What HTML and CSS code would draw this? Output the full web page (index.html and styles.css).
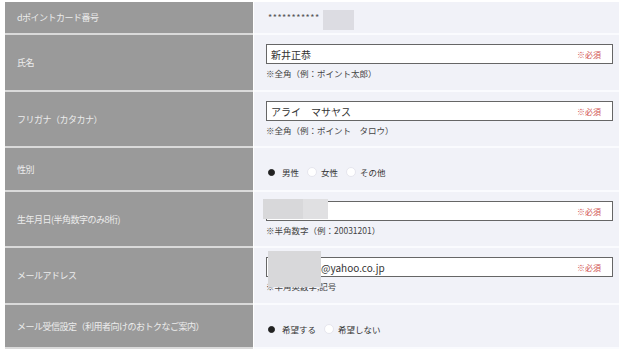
FILE: index.html
```html
<!DOCTYPE html>
<html lang="ja">
    <head>
        <title>会員情報の変更</title>
        <meta charset="utf-8" />
        <link rel="stylesheet" href="styles.css">
    </head>
    <body>
        <div class="form">
            <div class="row row-short">
                <div class="label">dポイントカード番号</div>
                <div class="value value-center">
                    <span class="card-no">***********</span>
                    <span class="redact redact-card"></span>
                </div>
            </div>

            <div class="row row-tall">
                <div class="label">氏名</div>
                <div class="value">
                    <div class="field"><span>新井正恭</span><span class="req">※必須</span></div>
                    <div class="note">※全角（例：ポイント太郎）</div>
                </div>
            </div>

            <div class="row row-tall2">
                <div class="label">フリガナ（カタカナ）</div>
                <div class="value">
                    <div class="field"><span>アライ　マサヤス</span><span class="req">※必須</span></div>
                    <div class="note">※全角（例：ポイント　タロウ）</div>
                </div>
            </div>

            <div class="row row-mid">
                <div class="label">性別</div>
                <div class="value value-center">
                    <div class="radios">
                        <span class="radio on"></span><span class="opt">男性</span>
                        <span class="radio"></span><span class="opt">女性</span>
                        <span class="radio"></span><span class="opt">その他</span>
                    </div>
                </div>
            </div>

            <div class="row row-tall2">
                <div class="label">生年月日(半角数字のみ8桁)</div>
                <div class="value">
                    <div class="field"><span></span><span class="req">※必須</span></div>
                    <div class="note">※半角数字（例：20031201）</div>
                    <span class="redact redact-birth1"></span>
                    <span class="redact redact-birth2"></span>
                </div>
            </div>

            <div class="row row-tall">
                <div class="label">メールアドレス</div>
                <div class="value">
                    <div class="field field-mail"><span>@yahoo.co.jp</span><span class="req">※必須</span></div>
                    <div class="note">※半角英数字,記号</div>
                    <span class="redact redact-mail"></span>
                </div>
            </div>

            <div class="row row-mid">
                <div class="label">メール受信設定（利用者向けのおトクなご案内）</div>
                <div class="value value-center">
                    <div class="radios">
                        <span class="radio on"></span><span class="opt">希望する</span>
                        <span class="radio"></span><span class="opt">希望しない</span>
                    </div>
                </div>
            </div>
        </div>
    </body>
</html>
```

FILE: styles.css
```css
body {
    margin: 0;
    background-color: #fff;
    font-family: "Noto Sans CJK JP", "Noto Sans", sans-serif;
    color: #333;
}

/* form table */
.form {
    width: 614px;
    margin: 2px 0 0 5px;
}
.row {
    display: grid;
    grid-template-columns: 248px 1fr;
    column-gap: 1px;
}
.row-short { height: 33px; }
.row-tall { height: 57px; }
.row-tall2 { height: 56px; }
.row-mid { height: 44px; }

.label {
    display: flex;
    align-items: center;
    padding-left: 12px;
    font-size: 9px;
    letter-spacing: -0.5px;
    color: #ececec;
    background-color: #9a9a9a;
    border-bottom: 2px solid #dadada;
}
.value {
    position: relative;
    padding: 9px 6px 0 12px;
    background-color: #f1f2f8;
    border-bottom: 2px solid #fafbfe;
}
.value-center {
    display: flex;
    align-items: center;
    padding-top: 0;
}

/* inputs */
.field {
    display: flex;
    justify-content: space-between;
    align-items: center;
    height: 18px;
    padding: 0 11px 0 4px;
    font-size: 10px;
    color: #333;
    background-color: #fff;
    border: 1px solid #666;
}
.field-mail { padding-left: 54px; }
.req {
    font-size: 8px;
    color: #d05050;
}
.note {
    margin-top: 3px;
    font-size: 8.5px;
    color: #444;
}

.card-no {
    font-size: 9px;
    letter-spacing: 0.5px;
    color: #555;
    padding-left: 2px;
}

/* radio buttons */
.radios {
    display: flex;
    align-items: center;
    padding-top: 6px;
    font-size: 8.5px;
    color: #333;
}
.radio {
    width: 8px;
    height: 8px;
    border-radius: 50%;
    background-color: #fff;
    border: 1px solid #e6e6ee;
    margin: 0 4px 0 0;
}
.radio.on {
    width: 5px;
    height: 5px;
    margin: 0 7px 0 2px;
    background-color: #222;
    border-color: #222;
}
.opt {
    margin-right: 8px;
}

/* masked personal data */
.redact {
    position: absolute;
    background-color: #dcdce2;
}
.redact-card {
    left: 69px;
    top: 8px;
    width: 31px;
    height: 20px;
}
.redact-birth1 {
    left: 9px;
    top: 7px;
    width: 40px;
    height: 20px;
    background-color: #d8d8da;
}
.redact-birth2 {
    left: 49px;
    top: 7px;
    width: 25px;
    height: 20px;
    background-color: #e0e0e2;
}
.redact-mail {
    left: 14px;
    top: 3px;
    width: 53px;
    height: 36px;
    background-color: #d8d8da;
}
```
